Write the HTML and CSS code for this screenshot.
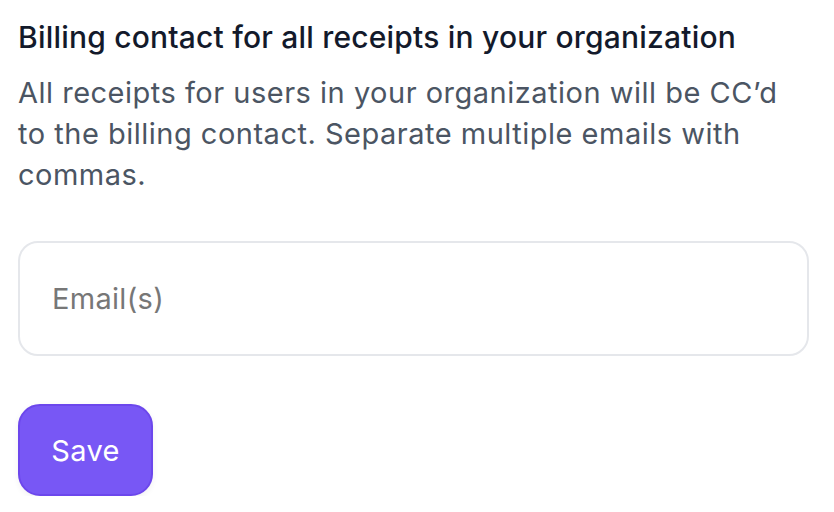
FILE: index.html
```html
<!DOCTYPE html>
<html>
<head>
<meta charset="utf-8">
<link rel="stylesheet" href="styles.css">
</head>
<body>
<main class="panel">
  <h2 class="title">Billing contact for all receipts in your organization</h2>
  <p class="desc">All receipts for users in your organization will be CC’d to the billing contact. Separate multiple emails with commas.</p>
  <input class="email" type="text" placeholder="Email(s)">
  <div class="actions">
    <button class="save" type="button">Save</button>
  </div>
</main>
</body>
</html>
```
FILE: styles.css
```css
html, body {
  margin: 0;
  padding: 0;
  background: #ffffff;
}
body {
  font-family: Inter, "Noto Sans", sans-serif;
}
.panel {
  display: flex;
  flex-direction: column;
  padding: 17px 18px 0 18px;
  width: 791px;
}
.title {
  margin: 0;
  font-size: 30px;
  line-height: 40px;
  font-weight: 500;
  letter-spacing: 0.2px;
  color: #131a2b;
}
.desc {
  margin: 15px 0 0 0;
  font-size: 29px;
  line-height: 41px;
  font-weight: 400;
  letter-spacing: 0.5px;
  color: #4b5563;
}
.email {
  box-sizing: border-box;
  margin-top: 46px;
  width: 791px;
  height: 115px;
  border: 2px solid #e5e7eb;
  border-radius: 20px;
  padding: 0 32px;
  font-family: inherit;
  font-size: 29px;
  letter-spacing: 0.3px;
  color: #111827;
  outline: none;
  background: #ffffff;
}
.email::placeholder {
  color: #777777;
}
.actions {
  margin-top: 48px;
  display: flex;
}
.save {
  box-sizing: border-box;
  width: 135px;
  height: 92px;
  border: 2px solid #6c47ec;
  border-radius: 22px;
  background: #7857f5;
  color: #ffffff;
  font-family: inherit;
  font-size: 29px;
  letter-spacing: 0.3px;
  padding: 0;
  box-shadow: 0 2px 6px rgba(0,0,0,0.06);
}
```
